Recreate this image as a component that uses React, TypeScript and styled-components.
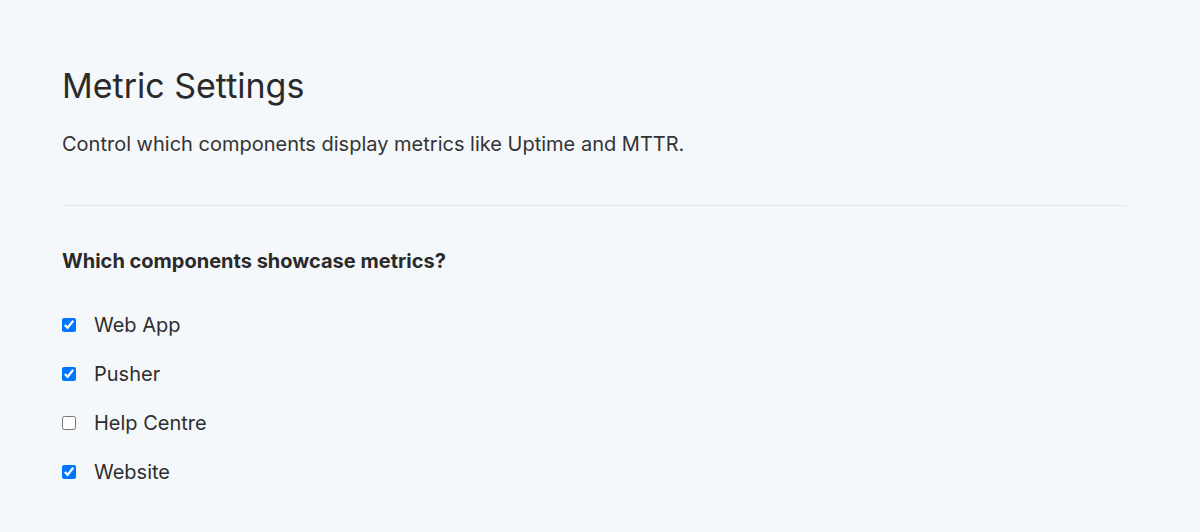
import styled, { createGlobalStyle } from 'styled-components';

// styles
const GlobalStyle = createGlobalStyle`
  html, body {
    margin: 0;
    background: #f5f8fa;
  }
  body {
    font-family: Inter, "Noto Sans", sans-serif;
    color: #2b2b2b;
  }
`;

const Page = styled.div`
  padding: 62px 74px 40px 62px;
`;

const Title = styled.h1`
  margin: 0;
  font-size: 34px;
  font-weight: 400;
  line-height: 48px;
  color: #2a2a2a;
`;

const Description = styled.p`
  margin: 20px 0 0;
  font-size: 20px;
  line-height: 28px;
  color: #333;
`;

const Divider = styled.hr`
  margin: 47px 0 0;
  border: none;
  border-top: 1px solid #e4e7ea;
`;

const Question = styled.h2`
  margin: 41px 0 0;
  font-size: 20px;
  font-weight: 700;
  line-height: 28px;
  color: #2a2a2a;
`;

const OptionList = styled.div`
  display: flex;
  flex-direction: column;
  gap: 21px;
  margin-top: 36px;
`;

const Option = styled.label`
  display: flex;
  align-items: center;
  gap: 18px;
  font-size: 20px;
  line-height: 28px;
  color: #2e2e2e;
  cursor: pointer;
`;

const Box = styled.input`
  width: 14px;
  height: 14px;
  margin: 0;
`;

const components = [
  { name: 'Web App', checked: true },
  { name: 'Pusher', checked: true },
  { name: 'Help Centre', checked: false },
  { name: 'Website', checked: true },
];

// component
export default function App() {
  return (
    <>
      <GlobalStyle />
      <Page>
        <Title>Metric Settings</Title>
        <Description>Control which components display metrics like Uptime and MTTR.</Description>
        <Divider />
        <Question>Which components showcase metrics?</Question>
        <OptionList>
          {components.map(c => (
            <Option key={c.name}>
              <Box type='checkbox' defaultChecked={c.checked} />
              {c.name}
            </Option>
          ))}
        </OptionList>
      </Page>
    </>
  );
}
